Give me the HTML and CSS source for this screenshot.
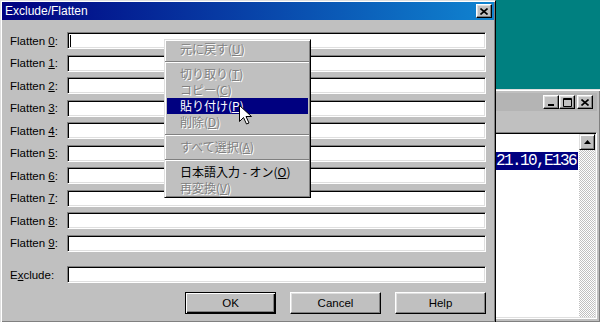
FILE: index.html
```html
<!DOCTYPE html>
<html lang="ja">
<head>
    <meta charset="UTF-8">
    <title>Exclude/Flatten</title>
    <link rel="stylesheet" href="styles.css">
</head>
<body>

    <!-- notepad window behind the dialog -->
    <div class="window notepad">
        <div class="titlebar inactive">
            <span class="caption"></span>
            <div class="caption-buttons">
                <span class="cap-btn"><svg width="8" height="8" viewBox="0 0 8 8"><rect x="1" y="6" width="6" height="2" fill="#000"/></svg></span>
                <span class="cap-btn"><svg width="9" height="9" viewBox="0 0 9 9"><path d="M0.5 0.5h8v8h-8z M0.5 1.5h8" fill="none" stroke="#000"/></svg></span>
                <span class="cap-btn close"><svg width="8" height="7" viewBox="0 0 8 7"><path d="M0.5 0.5l7 6M7.5 0.5l-7 6" stroke="#000" stroke-width="1.6"/></svg></span>
            </div>
        </div>
        <div class="toolbar"></div>
        <div class="client">
            <div class="text-area">
                <span class="selected">21.10,E136</span>
            </div>
            <div class="vscroll">
                <span class="scroll-btn"><svg width="7" height="4" viewBox="0 0 7 4"><path d="M3.5 0L7 4H0z" fill="#000"/></svg></span>
                <div class="track"></div>
            </div>
        </div>
    </div>

    <!-- the dialog -->
    <div class="window dialog">
        <div class="titlebar">
            <span class="caption">Exclude/Flatten</span>
            <div class="caption-buttons">
                <span class="cap-btn close"><svg width="8" height="7" viewBox="0 0 8 7"><path d="M0.5 0.5l7 6M7.5 0.5l-7 6" stroke="#000" stroke-width="1.6"/></svg></span>
            </div>
        </div>
        <div class="dialog-body">
            <div class="fields">
                <label>Flatten <u>0</u>:</label><div class="field"><span class="caret"></span></div>
                <label>Flatten <u>1</u>:</label><div class="field"></div>
                <label>Flatten <u>2</u>:</label><div class="field"></div>
                <label>Flatten <u>3</u>:</label><div class="field"></div>
                <label>Flatten <u>4</u>:</label><div class="field"></div>
                <label>Flatten <u>5</u>:</label><div class="field"></div>
                <label>Flatten <u>6</u>:</label><div class="field"></div>
                <label>Flatten <u>7</u>:</label><div class="field"></div>
                <label>Flatten <u>8</u>:</label><div class="field"></div>
                <label>Flatten <u>9</u>:</label><div class="field"></div>
            </div>
            <div class="fields exclude">
                <label>E<u>x</u>clude:</label><div class="field"></div>
            </div>
            <div class="buttons">
                <div class="btn default">OK</div>
                <div class="btn">Cancel</div>
                <div class="btn">Help</div>
            </div>
        </div>
    </div>

    <!-- right-click menu over the first field -->
    <div class="context-menu">
        <div class="item disabled">元に戻す(<u>U</u>)</div>
        <div class="sep"></div>
        <div class="item disabled">切り取り(<u>T</u>)</div>
        <div class="item disabled">コピー(<u>C</u>)</div>
        <div class="item active">貼り付け(<u>P</u>)</div>
        <div class="item disabled">削除(<u>D</u>)</div>
        <div class="sep"></div>
        <div class="item disabled">すべて選択(<u>A</u>)</div>
        <div class="sep"></div>
        <div class="item">日本語入力 - オン(<u>O</u>)</div>
        <div class="item disabled">再変換(<u>V</u>)</div>
    </div>

    <svg class="pointer" width="13" height="20" viewBox="0 0 13 20">
        <path d="M0.5 0.5v16l4-4 3 6.5 2.5-1-3-6.5h5.5z" fill="#fff" stroke="#000"/>
    </svg>

</body>
</html>
```

FILE: styles.css
```css
* {
    box-sizing: border-box;
}
body {
    position: relative;
    width: 600px;
    height: 322px;
    margin: 0;
    overflow: hidden;
    background-color: #008080;
    font-family: "Liberation Sans", Arial, sans-serif;
    font-size: 11.5px;
    color: #000;
}

/* raised window frame */
.window {
    position: absolute;
    display: flex;
    flex-direction: column;
    background-color: #c0c0c0;
    border: 1px solid;
    border-color: #dfdfdf #000 #000 #dfdfdf;
    box-shadow: inset 1px 1px #fff, inset -1px -1px #808080;
}
.dialog {
    left: 0;
    top: 0;
    width: 496px;
    height: 323px;
    padding: 1px;
}
.notepad {
    left: 490px;
    top: 89px;
    width: 111px;
    height: 234px;
    padding: 3px;
}

.titlebar {
    display: flex;
    align-items: center;
    justify-content: space-between;
    height: 18px;
    padding: 0 2px 0 3px;
    background: linear-gradient(90deg, #000080, #1084d0);
    color: white;
    font-size: 12px;
}
.titlebar.inactive {
    background: #b4b4b4;
}
.caption-buttons {
    display: flex;
}
.cap-btn {
    display: flex;
    justify-content: center;
    align-items: center;
    width: 16px;
    height: 14px;
    background-color: #c0c0c0;
    border: 1px solid;
    border-color: #fff #000 #000 #fff;
    box-shadow: inset -1px -1px #808080, inset 1px 1px #dfdfdf;
}
.cap-btn.close {
    margin-left: 2px;
}
.notepad .caption-buttons {
    margin-right: 2px;
}

/* dialog contents */
.dialog-body {
    display: flex;
    flex-direction: column;
    padding: 12px 8px 0 8px;
}
.fields {
    display: grid;
    grid-template-columns: 57px 1fr;
    grid-auto-rows: 17px;
    row-gap: 5.5px;
    align-items: center;
}
.fields.exclude {
    margin-top: 14.5px;
}
.field {
    height: 17px;
    background-color: white;
    border: 1px solid;
    border-color: #808080 #fff #fff #808080;
    box-shadow: inset 1px 1px #000, inset -1px -1px #dfdfdf;
    padding: 2px 0 0 2px;
}
.caret {
    display: block;
    width: 1px;
    height: 12px;
    background-color: #000;
}
.buttons {
    display: flex;
    justify-content: flex-end;
    gap: 14px;
    margin-top: 9px;
}
.btn {
    display: flex;
    justify-content: center;
    align-items: center;
    width: 91px;
    height: 22px;
    border: 1px solid;
    border-color: #fff #000 #000 #fff;
    box-shadow: inset -1px -1px #808080, inset 1px 1px #dfdfdf;
}
.btn.default {
    border-color: #000;
    box-shadow: inset 1px 1px #fff, inset -1px -1px #000, inset -2px -2px #808080;
}

/* notepad */
.toolbar {
    height: 21px;
}
.client {
    display: flex;
    flex: 1;
    padding: 1px;
    border: 1px solid;
    border-color: #808080 #fff #fff #808080;
    box-shadow: inset 1px 1px #000, inset -1px -1px #dfdfdf;
}
.text-area {
    flex: 1;
    padding-top: 18px;
    background-color: white;
    font-family: "Liberation Mono", monospace;
    font-size: 16px;
    letter-spacing: -1.6px;
    line-height: 18px;
}
.selected {
    display: inline-block;
    padding-right: 2px;
    background-color: #000080;
    color: white;
}
.vscroll {
    display: flex;
    flex-direction: column;
    width: 16px;
}
.scroll-btn {
    display: flex;
    justify-content: center;
    align-items: center;
    height: 16px;
    background-color: #c0c0c0;
    border: 1px solid;
    border-color: #dfdfdf #000 #000 #dfdfdf;
    box-shadow: inset 1px 1px #fff, inset -1px -1px #808080;
}
.track {
    flex: 1;
    background: repeating-conic-gradient(#c0c0c0 0 25%, #fff 0 50%) 0 0 / 2px 2px;
}

/* context menu */
.context-menu {
    position: absolute;
    left: 164px;
    top: 39px;
    width: 147px;
    padding: 1px 2px;
    background-color: #c0c0c0;
    border: 1px solid;
    border-color: #dfdfdf #000 #000 #dfdfdf;
    box-shadow: inset 1px 1px #fff, inset -1px -1px #808080;
    font-family: "Noto Sans CJK JP", sans-serif;
    font-size: 12px;
}
.item {
    height: 16px;
    padding-left: 13px;
    line-height: 16px;
    white-space: nowrap;
}
.item.disabled {
    color: #808080;
    text-shadow: 1px 1px 0 #fff;
}
.item.active {
    background-color: #000080;
    color: white;
}
.sep {
    height: 2px;
    margin: 4px -1px 3px -2px;
    border-top: 1px solid #808080;
    border-bottom: 1px solid #fff;
}

.pointer {
    position: absolute;
    left: 239px;
    top: 105px;
}
```
